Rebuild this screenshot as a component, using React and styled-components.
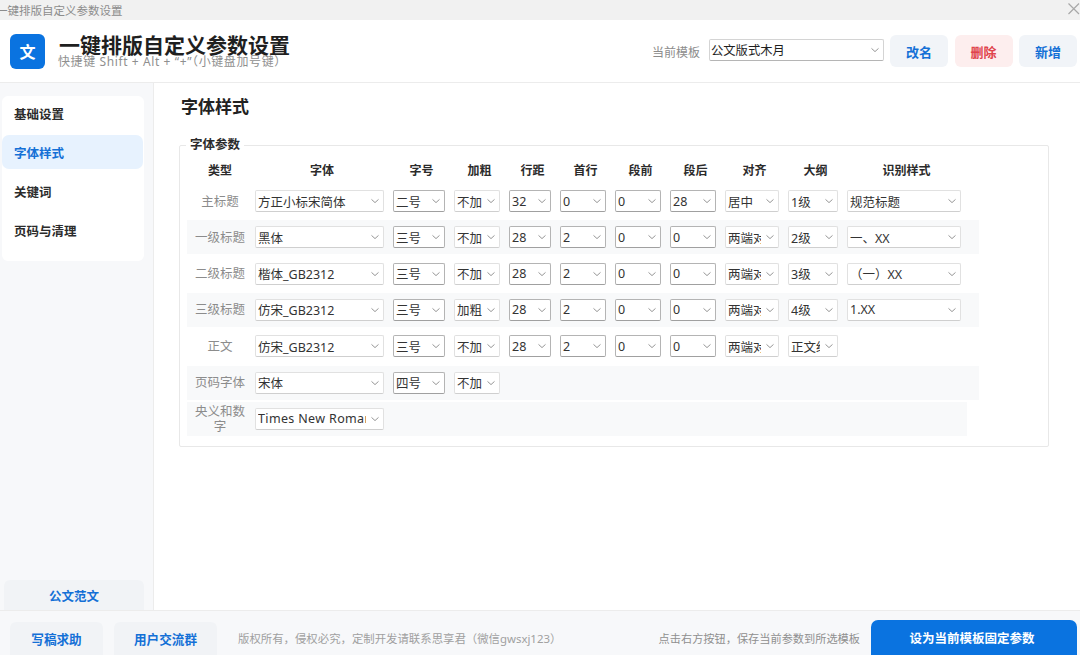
import styled, { createGlobalStyle } from 'styled-components'

const GlobalStyle = createGlobalStyle`
  html, body {
    margin: 0;
    padding: 0;
    background: #fff;
    font-family: "Noto Sans", "Noto Sans CJK SC", sans-serif;
  }
  * { box-sizing: border-box; }
`

const Page = styled.div`
  width: 1080px;
  height: 655px;
  display: flex;
  flex-direction: column;
  overflow: hidden;
`

const TitleBar = styled.div`
  height: 20px;
  flex: none;
  background: #f1f1f1;
  display: flex;
  align-items: center;
  justify-content: space-between;
  color: #8c8c8c;
  font-size: 11.5px;
  overflow: hidden;
  svg { color: #a8a8a8; }
`

const TitleText = styled.span`
  margin-left: -4px;
`

const Header = styled.header`
  height: 63px;
  flex: none;
  display: flex;
  align-items: center;
  padding: 0 3px 0 10px;
  border-bottom: 1px solid #ececec;
`

const Logo = styled.div`
  width: 35px;
  height: 35px;
  border-radius: 6px;
  background: #0a73e0;
  color: #fff;
  font-size: 16px;
  font-weight: 700;
  display: flex;
  align-items: center;
  justify-content: center;
  flex: none;
`

const HeaderTitles = styled.div`
  margin-left: 14px;
`

const AppTitle = styled.h1`
  margin: 0;
  font-size: 21px;
  line-height: 21px;
  font-weight: 700;
  color: #1f1f1f;
  white-space: nowrap;
`

const AppHint = styled.div`
  margin-left: -1px;
  font-size: 12px;
  line-height: 12px;
  color: #8f8f8f;
  letter-spacing: 0.6px;
  white-space: nowrap;
`

const HeaderRight = styled.div`
  margin-left: auto;
  display: flex;
  align-items: center;
`

const TemplateLabel = styled.span`
  font-size: 12px;
  color: #8c8c8c;
  margin-right: 9px;
  margin-top: 1px;
`

const TemplateSelect = styled.div`
  width: 175px;
  height: 22px;
  margin-top: -3px;
  margin-right: 6px;
  border: 1px solid #d4d4d4;
  border-bottom-color: #b5b5b5;
  border-radius: 2px;
  background: #fff;
  display: flex;
  align-items: center;
  justify-content: space-between;
  padding: 0 3px 0 1px;
  font-size: 12.3px;
  color: #1f1f1f;
`

const ActionButton = styled.button`
  width: 58px;
  height: 32px;
  margin-left: ${(p) => (p.$first ? '0' : '6.5px')};
  border: none;
  border-radius: 6px;
  background: ${(p) => (p.$danger ? '#fdeeee' : '#f1f4f8')};
  color: ${(p) => (p.$danger ? '#e0444c' : '#1470d6')};
  font: 700 13px "Noto Sans", "Noto Sans CJK SC", sans-serif;
  padding: 0;
`

const Body = styled.div`
  flex: 1;
  display: flex;
  min-height: 0;
`

const Sidebar = styled.aside`
  width: 154px;
  flex: none;
  background: #f7f8fa;
  border-right: 1px solid #ececec;
  padding: 13px 9px 0 2px;
  display: flex;
  flex-direction: column;
`

const NavCard = styled.nav`
  background: #fff;
  border-radius: 6px;
  height: 165px;
  display: flex;
  flex-direction: column;
  gap: 5px;
`

const NavItem = styled.div`
  height: 34px;
  flex: none;
  margin-right: 1px;
  border-radius: 7px;
  padding-left: 12px;
  display: flex;
  align-items: center;
  font-size: 12.5px;
  font-weight: 700;
  color: ${(p) => (p.$active ? '#1470d6' : '#2b2b2b')};
  background: ${(p) => (p.$active ? '#e7f2fe' : 'transparent')};
`

const SampleButton = styled.div`
  margin-top: auto;
  margin-left: 2px;
  height: 30px;
  border-radius: 6px 6px 0 0;
  background: #f1f3f6;
  color: #1470d6;
  font-size: 12.5px;
  font-weight: 700;
  display: flex;
  align-items: center;
  justify-content: center;
`

const Main = styled.main`
  flex: 1;
  padding: 12px 31px 0 25px;
  min-width: 0;
`

const SectionTitle = styled.h2`
  margin: 0 0 0 2px;
  font-size: 17px;
  line-height: 24px;
  font-weight: 700;
  color: #222;
`

const ParamBox = styled.fieldset`
  margin: 19px 0 0 0;
  padding: 5px 0 0 7px;
  height: 309px;
  border: 1px solid #e8e8e8;
  border-radius: 2px;
`

const Legend = styled.legend`
  margin-left: -1px;
  padding: 0 4px;
  font-size: 12.5px;
  line-height: 14px;
  font-weight: 700;
  color: #2b2b2b;
`

const columns = '52px 129px 52px 46px 42px 46px 46px 46px 54px 50px 114px'

const HeadRow = styled.div`
  display: grid;
  grid-template-columns: ${columns};
  column-gap: 9px;
  height: 27px;
  padding: 0 0 2px 7px;
  align-items: center;
  font-size: 12px;
  font-weight: 700;
  color: #2b2b2b;
  text-align: center;

  > div + div {
    padding-left: 5px;
  }
`

const Row = styled.div`
  display: grid;
  grid-template-columns: ${columns};
  column-gap: 9px;
  height: 34px;
  margin-bottom: 2.33px;
  padding-left: 7px;
  align-items: center;
  width: ${(p) => (p.$narrow ? '780px' : '792px')};
  background: ${(p) => (p.$shade ? '#f8f9fa' : 'transparent')};
`

const RowLabel = styled.div`
  font-size: 12.5px;
  line-height: 15px;
  color: #8c8c8c;
  text-align: center;
`

const Select = styled.div`
  height: 22px;
  border: 1px solid ${(p) => (p.$strong ? '#b4b4b4' : '#e1e1e1')};
  border-bottom-color: ${(p) => (p.$strong ? '#a0a0a0' : '#cfcfcf')};
  border-radius: 2px;
  background: #fff;
  display: flex;
  align-items: center;
  padding: 0 3px 0 2px;
  font-size: 12.5px;
  color: #333;
  white-space: nowrap;
`

const SelectText = styled.span`
  flex: 1;
  min-width: 0;
  margin-right: 5px;
  overflow: hidden;
  letter-spacing: ${(p) => (p.$latin ? '0.35px' : '0')};
`

const Footer = styled.footer`
  height: 45px;
  flex: none;
  background: #f7f8fa;
  border-top: 1px solid #ececec;
  display: flex;
  align-items: flex-end;
  padding: 0 3px 0 10px;
`

const FooterButton = styled.button`
  width: ${(p) => p.$w}px;
  height: 33px;
  margin-right: 11px;
  border: none;
  border-radius: 6px 6px 0 0;
  background: #f1f3f6;
  color: #1470d6;
  font: 700 12.6px "Noto Sans", "Noto Sans CJK SC", sans-serif;
  padding: 0;
`

const FooterNote = styled.span`
  font-size: 11.4px;
  line-height: 33px;
  color: #a0a0a0;
  margin-left: 10px;
  white-space: nowrap;
`

const FooterTip = styled.span`
  font-size: 11.2px;
  line-height: 33px;
  color: #8f8f8f;
  margin-left: auto;
  white-space: nowrap;
`

const SaveButton = styled.button`
  width: 206px;
  height: 35px;
  margin-left: 11px;
  border: none;
  border-radius: 7px 7px 0 0;
  background: #0a73e0;
  color: #fff;
  font: 700 12.5px "Noto Sans", "Noto Sans CJK SC", sans-serif;
  padding: 0 4px 0 0;
`

const ChevronIcon = styled.svg`
  flex: none;
  margin-right: 1px;
`

const Chevron = () => (
  <ChevronIcon width="8" height="8" viewBox="0 0 8 8">
    <path d="M0.5 2.4 L4 5.6 L7.5 2.4" fill="none" stroke="#8a8a8a" strokeWidth="0.9" />
  </ChevronIcon>
)

const Field = ({ value, strong }) => (
  <Select $strong={strong}>
    <SelectText $latin={/^[A-Z]/.test(value)}>{value}</SelectText>
    <Chevron />
  </Select>
)

const headers = ['类型', '字体', '字号', '加粗', '行距', '首行', '段前', '段后', '对齐', '大纲', '识别样式']

const rows = [
  { label: '主标题', cells: ['方正小标宋简体', '二号', '不加', '32', '0', '0', '28', '居中', '1级', '规范标题'] },
  { label: '一级标题', shade: true, cells: ['黑体', '三号', '不加', '28', '2', '0', '0', '两端对齐', '2级', '一、XX'] },
  { label: '二级标题', cells: ['楷体_GB2312', '三号', '不加', '28', '2', '0', '0', '两端对齐', '3级', '（一）XX'] },
  { label: '三级标题', shade: true, cells: ['仿宋_GB2312', '三号', '加粗', '28', '2', '0', '0', '两端对齐', '4级', '1.XX'] },
  { label: '正文', cells: ['仿宋_GB2312', '三号', '不加', '28', '2', '0', '0', '两端对齐', '正文级'] },
  { label: '页码字体', shade: true, cells: ['宋体', '四号', '不加'] },
  { label: '央义和数字', shade: true, narrow: true, cells: ['Times New Roman'] },
]

// columns whose select has the darker border
const strongCols = [1, 3, 4, 5, 6]

const App = () => (
  <Page>
    <GlobalStyle />
    <TitleBar>
      <TitleText>一键排版自定义参数设置</TitleText>
      <svg width="20" height="20" viewBox="0 0 20 20">
        <path d="M8.5 3.5 L19 14 M19 3.5 L8.5 14" stroke="currentColor" strokeWidth="1.2" fill="none" />
      </svg>
    </TitleBar>
    <Header>
      <Logo>文</Logo>
      <HeaderTitles>
        <AppTitle>一键排版自定义参数设置</AppTitle>
        <AppHint>快捷键 Shift + Alt + “+”（小键盘加号键）</AppHint>
      </HeaderTitles>
      <HeaderRight>
        <TemplateLabel>当前模板</TemplateLabel>
        <TemplateSelect>
          公文版式木月
          <Chevron />
        </TemplateSelect>
        <ActionButton $first>改名</ActionButton>
        <ActionButton $danger>删除</ActionButton>
        <ActionButton>新增</ActionButton>
      </HeaderRight>
    </Header>
    <Body>
      <Sidebar>
        <NavCard>
          <NavItem>基础设置</NavItem>
          <NavItem $active>字体样式</NavItem>
          <NavItem>关键词</NavItem>
          <NavItem>页码与清理</NavItem>
        </NavCard>
        <SampleButton>公文范文</SampleButton>
      </Sidebar>
      <Main>
        <SectionTitle>字体样式</SectionTitle>
        <ParamBox>
          <Legend>字体参数</Legend>
          <HeadRow>
            {headers.map((h) => (
              <div key={h}>{h}</div>
            ))}
          </HeadRow>
          {rows.map((row) => (
            <Row key={row.label} $shade={row.shade} $narrow={row.narrow}>
              <RowLabel>{row.label}</RowLabel>
              {row.cells.map((value, i) => (
                <Field key={i} value={value} strong={strongCols.includes(i)} />
              ))}
            </Row>
          ))}
        </ParamBox>
      </Main>
    </Body>
    <Footer>
      <FooterButton $w={93}>写稿求助</FooterButton>
      <FooterButton $w={103}>用户交流群</FooterButton>
      <FooterNote>版权所有，侵权必究，定制开发请联系思享君（微信gwsxj123）</FooterNote>
      <FooterTip>点击右方按钮，保存当前参数到所选模板</FooterTip>
      <SaveButton>设为当前模板固定参数</SaveButton>
    </Footer>
  </Page>
)

export default App
